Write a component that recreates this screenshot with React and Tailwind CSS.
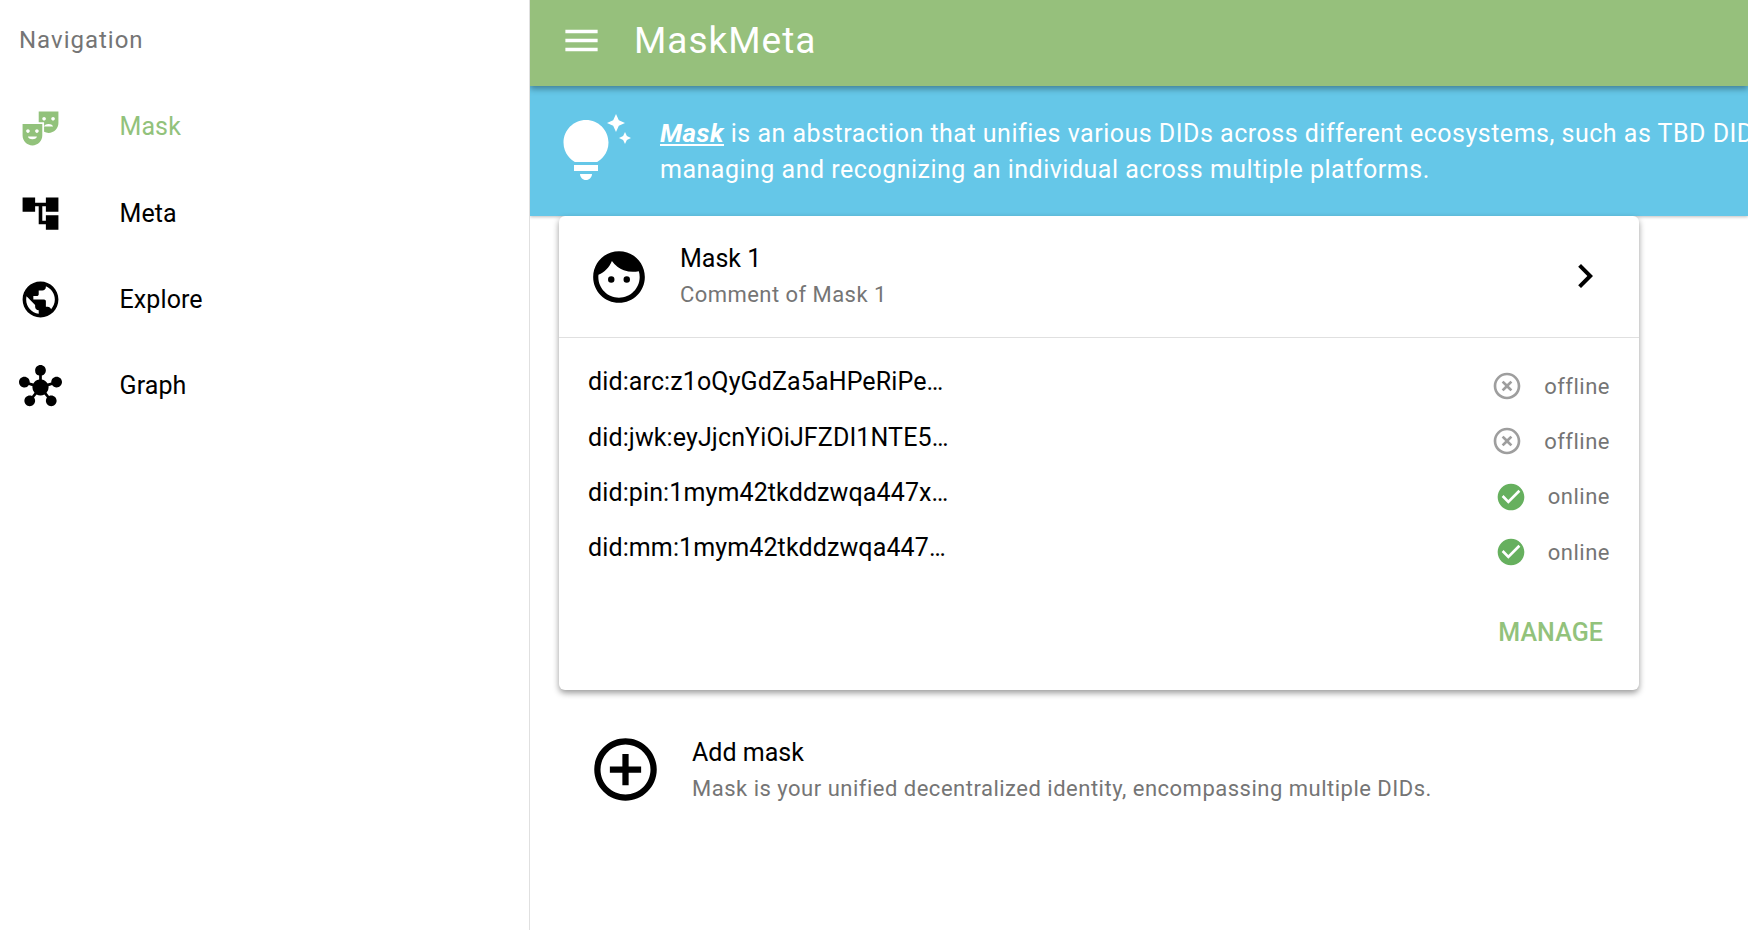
import React from "react";
import { MdTheaterComedy, MdAccountTree, MdPublic, MdHub, MdFace, MdMenu, MdTipsAndUpdates, MdChevronRight, MdHighlightOff, MdCheckCircle, MdAddCircleOutline } from "react-icons/md";

const nav = [
  { label: "Mask", Icon: MdTheaterComedy, active: true },
  { label: "Meta", Icon: MdAccountTree },
  { label: "Explore", Icon: MdPublic },
  { label: "Graph", Icon: MdHub },
];

const dids = [
  { id: "did:arc:z1oQyGdZa5aHPeRiPe…", on: false },
  { id: "did:jwk:eyJjcnYiOiJFZDI1NTE5…", on: false },
  { id: "did:pin:1mym42tkddzwqa447x…", on: true },
  { id: "did:mm:1mym42tkddzwqa447…", on: true },
];

export default function App() {
  return (
    <div className="flex h-[930px] w-[1748px] overflow-hidden bg-white font-['Roboto',sans-serif]">
      <aside className="w-[530px] shrink-0 border-r border-[#e0e0e0]">
        <div className="flex h-[80px] items-center pl-[19px] text-[24px] tracking-[1px] text-[#757575]">Navigation</div>
        <div className="pt-[4px]">
          {nav.map(({ label, Icon, active }) => (
            <div key={label} className={`flex h-[86.3px] items-center ${active ? "text-[#92c27b]" : "text-black"}`}>
              <div className="flex w-[119.5px] shrink-0 pl-[18.5px]">
                <Icon size={43} />
              </div>
              <span className="text-[25px] tracking-[0.1px]">{label}</span>
            </div>
          ))}
        </div>
      </aside>
      <main className="min-w-0 flex-1 overflow-hidden">
        <header className="relative z-10 flex h-[86px] items-center bg-[#96c07c] pb-[6px] pl-[30px] text-white shadow-[0_3px_6px_rgba(0,0,0,0.35)]">
          <MdMenu size={43} className="mr-[31px]" />
          <span className="mt-[2px] text-[37px] tracking-[1px]">MaskMeta</span>
        </header>
        <div className="flex h-[130px] bg-[#65c7e8] pl-[29px] pt-[28px] text-white shadow-[0_1px_3px_rgba(0,0,0,0.25)]">
          <MdTipsAndUpdates size={72} className="mr-[29px] shrink-0" />
          <div className="whitespace-nowrap pt-[1px] text-[25px] leading-[36px] tracking-[0.5px]">
            <div><a className="text-[26px] font-bold italic underline">Mask</a> is an abstraction that unifies various DIDs across different ecosystems, such as TBD DIDs, providing a unified way of</div>
            <div>managing and recognizing an individual across multiple platforms.</div>
          </div>
        </div>
        <section className="ml-[29px] w-[1080px] rounded-[6px] bg-white shadow-[0_3px_6px_rgba(0,0,0,0.4)]">
          <div className="flex h-[122px] items-center border-b border-[#e0e0e0] pl-[29px] pr-[30px]">
            <MdFace size={62} className="mr-[30px] shrink-0 text-black" />
            <div className="flex-1 pt-[1px]">
              <div className="text-[25px] leading-[36px] text-black">Mask 1</div>
              <div className="text-[22px] leading-[36px] tracking-[0.45px] text-[#757575]">Comment of Mask 1</div>
            </div>
            <MdChevronRight size={48} className="mb-[2px] text-black" />
          </div>
          <div className="px-[29px] pt-[16.5px]">
            {dids.map(({ id, on }) => (
              <div key={id} className="flex h-[55.3px] items-center justify-between">
                <span className="text-[25px] tracking-[0.12px] text-black">{id}</span>
                <div className="mt-[8px] flex items-center text-[22px] tracking-[0.5px] text-[#757575]">
                  {on ? <MdCheckCircle size={32} className="mr-[21px] text-[#66b05e]" /> : <MdHighlightOff size={32} className="mr-[21px] text-[#9e9e9e]" />}
                  {on ? "online" : "offline"}
                </div>
              </div>
            ))}
          </div>
          <div className="flex h-[114.5px] items-center justify-end pr-[36px]">
            <span className="text-[25px] font-medium tracking-[0.1px] text-[#92c27b]">MANAGE</span>
          </div>
        </section>
        <div className="ml-[29px] mt-[42px] flex w-[1080px] items-center pl-[29px]">
          <MdAddCircleOutline size={75} className="mr-[29px] shrink-0 text-black" />
          <div className="pt-[3px]">
            <div className="text-[25px] leading-[36px] text-black">Add mask</div>
            <div className="text-[22px] leading-[36px] tracking-[0.5px] text-[#757575]">Mask is your unified decentralized identity, encompassing multiple DIDs.</div>
          </div>
        </div>
      </main>
    </div>
  );
}
